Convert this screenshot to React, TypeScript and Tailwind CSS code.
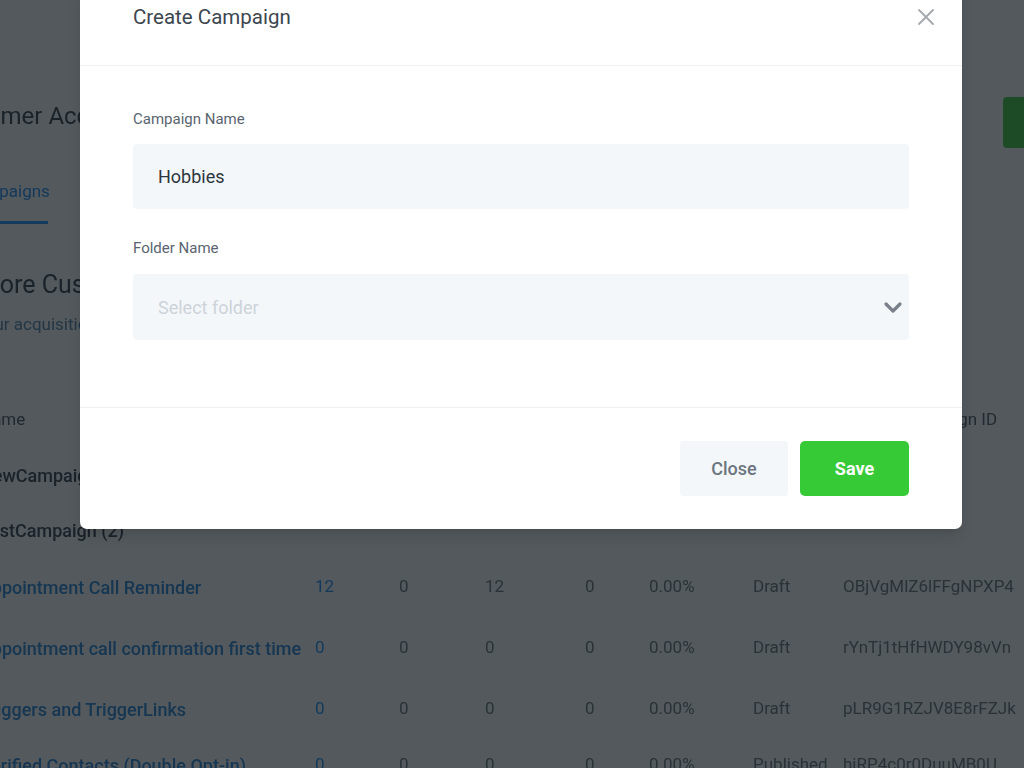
import React from "react";

const rows = [
  { name: "NewCampaign", link: false, h: "h-[55px]", v: ["", "", "", "", "", "", ""] },
  { name: "TestCampaign (2)", link: false, h: "h-[57px]", v: ["", "", "", "", "", "", ""] },
  { name: "Appointment Call Reminder", link: true, h: "h-[61px]", v: ["12", "0", "12", "0", "0.00%", "Draft", "OBjVgMlZ6lFFgNPXP4"] },
  { name: "Appointment call confirmation first time", link: true, h: "h-[61px]", v: ["0", "0", "0", "0", "0.00%", "Draft", "rYnTj1tHfHWDY98vVn"] },
  { name: "Triggers and TriggerLinks", link: true, h: "h-[56px]", v: ["0", "0", "0", "0", "0.00%", "Draft", "pLR9G1RZJV8E8rFZJk"] },
  { name: "Verified Contacts (Double Opt-in)", link: true, h: "h-[56px]", v: ["0", "0", "0", "0", "0.00%", "Published", "hiRP4c0r0DuuMB0U"] },
];

function Background() {
  return (
    <div className="flex flex-col w-[1200px] blur-[0.6px]">
      <div className="h-[97px]" />
      <div className="flex items-start h-[51px]">
        <div className="ml-[-62px] mt-[3px] w-[1065px] text-[24px] leading-[32px] text-[#2d3748]">Customer Acquisition</div>
        <div className="w-[120px] h-[51px] rounded bg-[#37ca37]" />
      </div>
      <div className="h-[28px]" />
      <div className="ml-[-36px] flex flex-col w-[84px]">
        <div className="h-[30px] text-[17px] text-[#188bf6] leading-[30px]">Campaigns</div>
        <div className="h-[3px] bg-[#188bf6] mt-[15px]" />
      </div>
      <div className="h-[46px]" />
      <div className="ml-[-22px] text-[25px] leading-[30px] text-[#2d3748]">More Customers</div>
      <div className="ml-[-92px] mt-[12px] text-[17px] leading-[24px] text-[#4f7fa8]">Increase your acquisition rate</div>
      <div className="h-[71px]" />
      <div className="ml-[-20px] flex h-[26px] items-center text-[17px] text-[#4a5560]">
        <div className="w-[920px]">Name</div>
        <div>Campaign ID</div>
      </div>
      <div className="flex flex-col mt-[21px]">
        {rows.map((r, i) => (
          <div
            key={i}
            className={`ml-[-20px] grid grid-cols-[335px_84px_86px_100px_60px_104px_90px_300px] ${r.h} items-start pt-[8px] text-[17px] text-[#607179] whitespace-nowrap`}
          >
            <div className={r.link ? "text-[18px] text-[#1d7fd6] font-medium" : "text-[18px] text-[#2d3748] font-medium"}>{r.name}</div>
            <div className="text-[#188bf6]">{r.v[0]}</div>
            <div>{r.v[1]}</div>
            <div>{r.v[2]}</div>
            <div>{r.v[3]}</div>
            <div className="ml-[4px]">{r.v[4]}</div>
            <div className="ml-[4px]">{r.v[5]}</div>
            <div className="ml-[4px]">{r.v[6]}</div>
          </div>
        ))}
      </div>
    </div>
  );
}

export default function App() {
  return (
    <div className="relative w-[1024px] h-[768px] overflow-hidden bg-[#f7f9fb] font-['Roboto','Liberation_Sans',sans-serif]">
      <Background />
      <div className="absolute inset-0 bg-[rgba(20,26,30,0.72)]" />
      <div className="absolute left-[80px] top-[-21px] w-[882px] bg-white rounded-[7px] shadow-lg flex flex-col">
        <div className="relative flex items-center pl-[53px] pr-[28px] pt-[24px] pb-[34px] border-b border-[#eef0f2]">
          <div className="text-[20.5px] leading-[28px] text-[#3c4650]">Create Campaign</div>
          <div className="ml-auto mr-[-1px] w-[18px] h-[18px] flex items-center justify-center">
            <svg width="18" height="18" viewBox="0 0 18 18" fill="none">
              <path d="M2 2 L16 16 M16 2 L2 16" stroke="#a3a8ad" strokeWidth="1.8" strokeLinecap="round" />
            </svg>
          </div>
        </div>
        <div className="flex flex-col px-[53px] pt-[43px] pb-[67px]">
          <div className="text-[15px] leading-[20px] text-[#5a6470]">Campaign Name</div>
          <div className="mt-[15px] h-[65px] rounded-[4px] bg-[#f3f7fa] flex items-center px-[25px] text-[18px] text-[#2d3640]">
            Hobbies
          </div>
          <div className="mt-[29px] text-[15px] leading-[20px] text-[#5a6470]">Folder Name</div>
          <div className="mt-[16px] h-[66px] rounded-[4px] bg-[#f3f7fa] flex items-center pl-[25px] pr-[6px] text-[18px] text-[#cdd3d9]">
            <span>Select folder</span>
            <svg className="ml-auto" width="20" height="14" viewBox="0 0 20 14" fill="none">
              <path d="M3 4 L10 11 L17 4" stroke="#7a8088" strokeWidth="3.2" strokeLinecap="round" strokeLinejoin="round" />
            </svg>
          </div>
        </div>
        <div className="flex justify-end items-center gap-[12px] px-[53px] pt-[33px] pb-[33px] border-t border-[#eef0f2]">
          <div className="w-[108px] h-[55px] rounded-[3px] bg-[#f3f7fa] flex items-center justify-center text-[18px] font-medium text-[#6b7580]">
            Close
          </div>
          <div className="w-[109px] h-[55px] rounded-[5px] bg-[#37ca37] flex items-center justify-center text-[18px] font-bold text-white">
            Save
          </div>
        </div>
      </div>
    </div>
  );
}
